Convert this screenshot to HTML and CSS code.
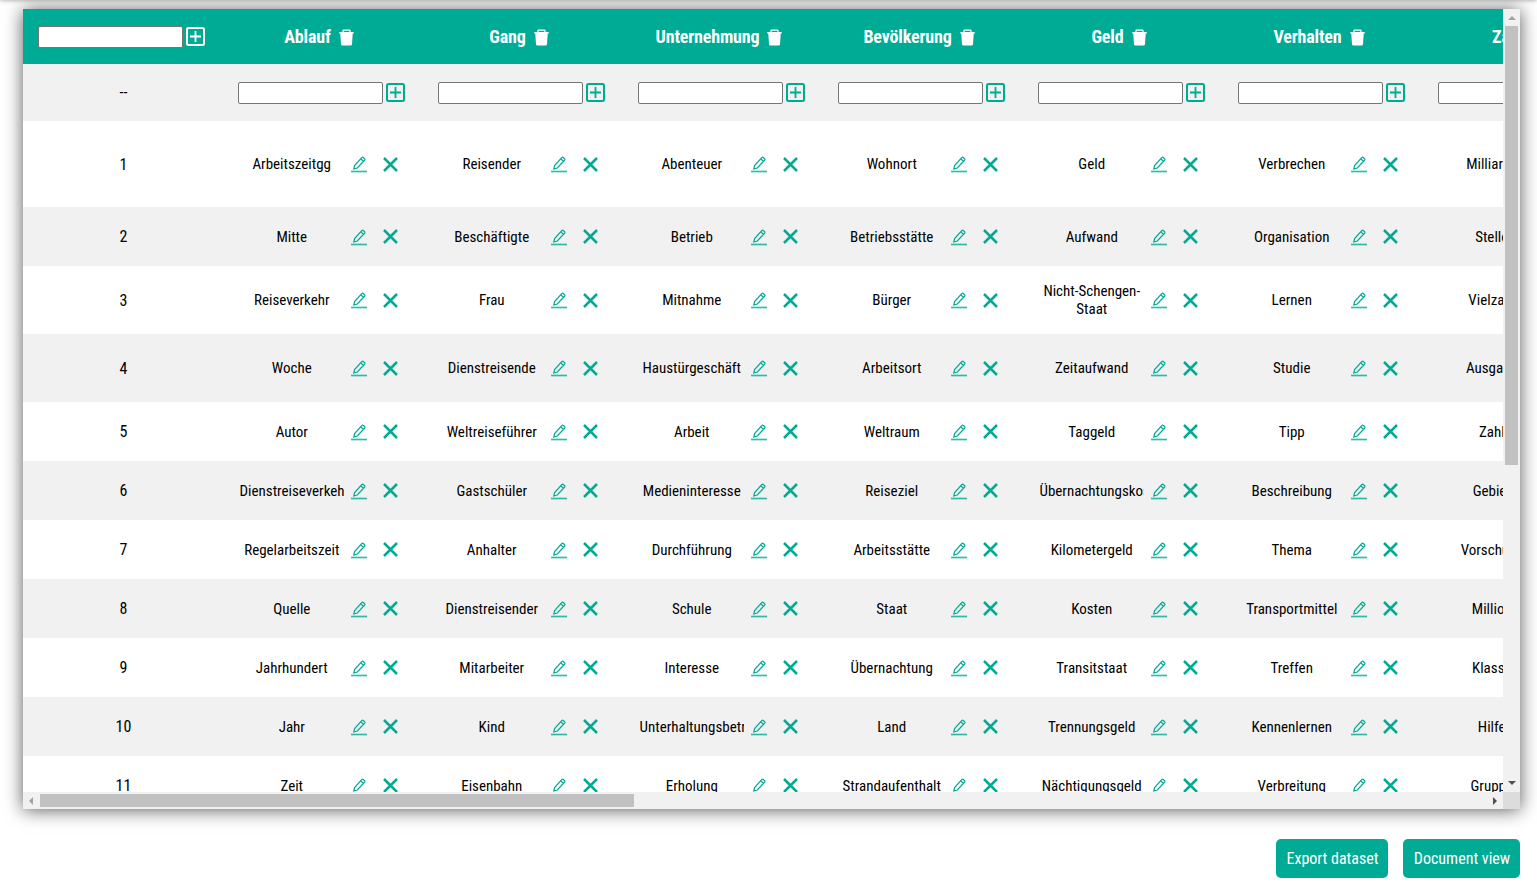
FILE: index.html
```
<!DOCTYPE html>
<html lang="de">
<head>
<meta charset="utf-8">
<title>Dataset</title>
<link rel="stylesheet" href="styles.css">
</head>
<body>
<svg class="sprite" width="0" height="0" aria-hidden="true">
  <symbol id="plus" viewBox="0 0 19 19"><rect x="1" y="1" width="17" height="17" rx="1.5" fill="none" stroke="currentColor" stroke-width="2"/><path d="M9.5 4v11M4 9.5h11" stroke="currentColor" stroke-width="1.8"/></symbol>
  <symbol id="trash" viewBox="0 0 15 17"><path d="M4 3.500V1.800Q4 1.200 4.600 1.200h5.800q.6 0 .6.600v1.700" fill="none" stroke="currentColor" stroke-width="1.2"/><path d="M.3 3h14.400v1.500H13.700L13 15.200a1.500 1.500 0 0 1-1.500 1.400h-8A1.500 1.500 0 0 1 2 15.200L1.300 4.500H.3z" fill="currentColor"/></symbol>
  <symbol id="edit" viewBox="0 0 16 17"><path d="M2.800 13L3.600 9.600 10.900 1.500Q11.600.9 12.300 1.500L13.700 2.700Q14.300 3.300 13.700 4L6.300 12zM9.800 2.900L12.400 5.200" fill="none" stroke="currentColor" stroke-width="1.200"/><path d="M0 15.500h16" stroke="currentColor" stroke-opacity=".8" stroke-width="1.700"/></symbol>
  <symbol id="cross" viewBox="0 0 15 15"><path d="M1 1L14 14M14 1L1 14" stroke="currentColor" stroke-width="2.500"/></symbol>
</svg>
<div class="topbar"></div>
<main class="page">
  <section class="panel">
    <div class="view"><div class="grid" id="grid"></div></div>
    <div class="vbar"><i class="arrow up"></i><div class="vthumb"></div><i class="arrow down"></i></div>
    <div class="hbar"><i class="arrow left"></i><div class="hthumb"></div><i class="arrow right"></i></div>
    <div class="corner"></div>
  </section>
  <div class="actions"><button class="btn export">Export dataset</button><button class="btn document">Document view</button></div>
</main>
<script src="table.js"></script>
</body>
</html>
```
FILE: styles.css
```
* { box-sizing: border-box; }
body { margin: 0; height: 889px; overflow: hidden; background: #fff; font-family: "Roboto Condensed", Roboto, sans-serif; font-stretch: 75%; font-size: 16px; color: #000; }
.sprite { position: absolute; }
.topbar { position: absolute; top: -10px; left: 0; width: 100%; height: 10px; box-shadow: 0 0 5px rgba(0,0,0,.4); z-index: 1; }
.page { padding: 9px 17px 0 23px; }
.panel { display: grid; grid-template: 783px 17px / 1480px 17px; box-shadow: 0 1px 17px rgba(0,0,0,.65); }
.view { overflow: hidden; background: #fff; }
.grid { width: 1600px; }
.row { display: grid; grid-template-columns: repeat(8, 200px); height: 59px; background: #fff; }
.row:nth-child(even) { background: #f1f1f1; }
.row.head { height: 55px; background: #00ab96; color: #fff; }
.row.new { height: 57px; }
.row.tall { height: 86px; }
.row.medium { height: 68px; }
.cell { display: flex; align-items: center; justify-content: center; padding-left: 1px; }
.form { justify-content: flex-start; padding-left: 15px; gap: 3px; color: #00ab96; }
.head .form { color: #fff; }
.field { width: 145px; height: 22px; margin: 0; padding: 1px 2px; border: 1px solid #767676; border-radius: 2px; background: #fff; }
.plus { width: 19px; height: 19px; }
.title { gap: 8px; padding-left: 0; padding-right: 8px; font-size: 18px; font-weight: 700; letter-spacing: -.15px; }
.trash { width: 15px; height: 17px; margin-top: 2px; }
.item { justify-content: flex-start; padding-left: 16px; color: #00ab96; }
.label { width: 105px; overflow: hidden; padding-left: .5px; text-align: center; font-size: 15px; line-height: 18px; color: #000; }
.edit { width: 16px; height: 17px; margin-left: 7px; margin-top: 1px; }
.cross { width: 15px; height: 15px; margin-left: 16px; }
.vbar, .hbar { display: flex; align-items: center; justify-content: space-between; background: #f1f1f1; }
.vbar { flex-direction: column; padding: 7px 0; }
.vthumb { width: 13px; height: 439px; margin: 6px 0 auto; background: #c1c1c1; }
.hbar { padding: 0 6px; }
.hthumb { width: 594px; height: 13px; margin: 0 auto 0 6px; background: #c1c1c1; }
.arrow { width: 0; height: 0; border: 4px solid transparent; }
.up { border-top: 0; border-bottom-color: #a3a3a3; }
.down { border-bottom: 0; border-top-color: #505050; }
.left { border-left: 0; border-right: 4px solid #a3a3a3; margin-right: 1px; }
.right { border-right: 0; border-left: 4px solid #505050; }
.corner { background: #dcdcdc; }
.actions { display: flex; justify-content: flex-end; gap: 15px; margin-top: 30px; }
.btn { height: 39px; padding: 0 0 0 1px; border: 0; border-radius: 5px; background: #00ab96; color: #fff; font: inherit; font-size: 16px; }
.export { width: 112px; }
.document { width: 117px; }
```
FILE: table.js
```
const titles = ["Ablauf", "Gang", "Unternehmung", "Bevölkerung", "Geld", "Verhalten", "Zeit"];
const rows = [
  ["Arbeitszeitgg", "Reisender", "Abenteuer", "Wohnort", "Geld", "Verbrechen", "Milliarde"],
  ["Mitte", "Beschäftigte", "Betrieb", "Betriebsstätte", "Aufwand", "Organisation", "Stelle"],
  ["Reiseverkehr", "Frau", "Mitnahme", "Bürger", "Nicht-Schengen-Staat", "Lernen", "Vielzahl"],
  ["Woche", "Dienstreisende", "Haustürgeschäft", "Arbeitsort", "Zeitaufwand", "Studie", "Ausgabe"],
  ["Autor", "Weltreiseführer", "Arbeit", "Weltraum", "Taggeld", "Tipp", "Zahl"],
  ["Dienstreiseverkehr", "Gastschüler", "Medieninteresse", "Reiseziel", "Übernachtungskosten", "Beschreibung", "Gebiet"],
  ["Regelarbeitszeit", "Anhalter", "Durchführung", "Arbeitsstätte", "Kilometergeld", "Thema", "Vorschuss"],
  ["Quelle", "Dienstreisender", "Schule", "Staat", "Kosten", "Transportmittel", "Million"],
  ["Jahrhundert", "Mitarbeiter", "Interesse", "Übernachtung", "Transitstaat", "Treffen", "Klasse"],
  ["Jahr", "Kind", "Unterhaltungsbetrieb", "Land", "Trennungsgeld", "Kennenlernen", "Hilfe"],
  ["Zeit", "Eisenbahn", "Erholung", "Strandaufenthalt", "Nächtigungsgeld", "Verbreitung", "Gruppe"]
];
titles[6] = "Zahl";
const icon = name => `<svg class="${name}"><use href="#${name}"/></svg>`;
const form = `<div class="cell form"><input class="field">${icon("plus")}</div>`;
const sizes = ["tall", "", "medium", "medium"];
let html = `<div class="row head">${form}${titles.map(t => `<div class="cell title"><span>${t}</span>${icon("trash")}</div>`).join("")}</div>`;
html += `<div class="row new"><div class="cell">--</div>${form.repeat(7)}</div>`;
rows.forEach((r, i) => {
  html += `<div class="row ${sizes[i] || ""}"><div class="cell">${i + 1}</div>${r.map(t => `<div class="cell item"><span class="label">${t}</span>${icon("edit")}${icon("cross")}</div>`).join("")}</div>`;
});
document.getElementById("grid").innerHTML = html;
```
